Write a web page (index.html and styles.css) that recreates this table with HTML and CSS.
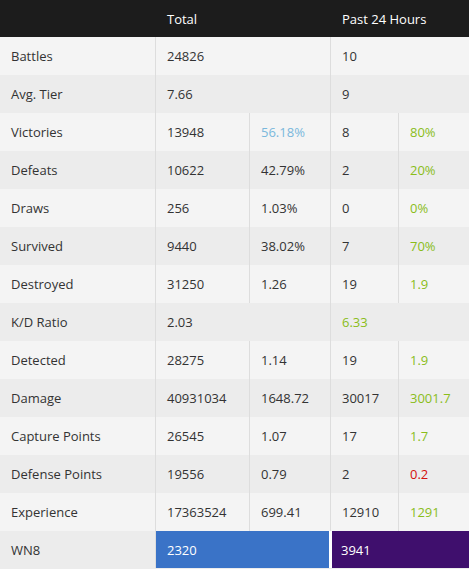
FILE: index.html
```html
<!DOCTYPE html>
<html lang="en">
<head>
<meta charset="utf-8">
<title>Stats</title>
<link rel="stylesheet" href="styles.css">
</head>
<body>
<div class="stats">
  <div class="row head">
    <div class="cell"></div>
    <div class="cell span2 nob">Total</div>
    <div class="cell span2 nob">Past 24 Hours</div>
  </div>
  <div class="row odd">
    <div class="cell">Battles</div>
    <div class="cell span2">24826</div>
    <div class="cell span2">10</div>
  </div>
  <div class="row even">
    <div class="cell">Avg. Tier</div>
    <div class="cell span2">7.66</div>
    <div class="cell span2">9</div>
  </div>
  <div class="row odd">
    <div class="cell">Victories</div>
    <div class="cell">13948</div>
    <div class="cell blue">56.18%</div>
    <div class="cell">8</div>
    <div class="cell green">80%</div>
  </div>
  <div class="row even">
    <div class="cell">Defeats</div>
    <div class="cell">10622</div>
    <div class="cell">42.79%</div>
    <div class="cell">2</div>
    <div class="cell green">20%</div>
  </div>
  <div class="row odd">
    <div class="cell">Draws</div>
    <div class="cell">256</div>
    <div class="cell">1.03%</div>
    <div class="cell">0</div>
    <div class="cell green">0%</div>
  </div>
  <div class="row even">
    <div class="cell">Survived</div>
    <div class="cell">9440</div>
    <div class="cell">38.02%</div>
    <div class="cell">7</div>
    <div class="cell green">70%</div>
  </div>
  <div class="row odd">
    <div class="cell">Destroyed</div>
    <div class="cell">31250</div>
    <div class="cell">1.26</div>
    <div class="cell">19</div>
    <div class="cell green">1.9</div>
  </div>
  <div class="row even">
    <div class="cell">K/D Ratio</div>
    <div class="cell span2">2.03</div>
    <div class="cell span2 green">6.33</div>
  </div>
  <div class="row odd">
    <div class="cell">Detected</div>
    <div class="cell">28275</div>
    <div class="cell">1.14</div>
    <div class="cell">19</div>
    <div class="cell green">1.9</div>
  </div>
  <div class="row even">
    <div class="cell">Damage</div>
    <div class="cell">40931034</div>
    <div class="cell">1648.72</div>
    <div class="cell">30017</div>
    <div class="cell green">3001.7</div>
  </div>
  <div class="row odd">
    <div class="cell">Capture Points</div>
    <div class="cell">26545</div>
    <div class="cell">1.07</div>
    <div class="cell">17</div>
    <div class="cell green">1.7</div>
  </div>
  <div class="row even">
    <div class="cell">Defense Points</div>
    <div class="cell">19556</div>
    <div class="cell">0.79</div>
    <div class="cell">2</div>
    <div class="cell red">0.2</div>
  </div>
  <div class="row odd">
    <div class="cell">Experience</div>
    <div class="cell">17363524</div>
    <div class="cell">699.41</div>
    <div class="cell">12910</div>
    <div class="cell green">1291</div>
  </div>
  <div class="row even">
    <div class="cell">WN8</div>
    <div class="cell span2 wn8-total">2320</div>
    <div class="cell span2 wn8-past">3941</div>
  </div>
</div>
</body>
</html>
```
FILE: styles.css
```css
html, body {
  margin: 0;
  padding: 0;
  background: #ffffff;
}
body {
  font-family: "Open Sans", "DejaVu Sans", sans-serif;
  font-size: 13px;
  color: #333333;
}
.stats {
  width: 469px;
}
.row {
  display: grid;
  grid-template-columns: 155px 94px 81px 68px 71px;
  height: 38px;
}
.row.head {
  height: 37px;
  background: #1c1c1c;
  color: #ffffff;
}
.row.odd {
  background: #f4f4f4;
}
.row.even {
  background: #ececec;
}
.cell {
  box-sizing: border-box;
  display: flex;
  align-items: center;
  padding-left: 11px;
  white-space: nowrap;
}
.cell + .cell {
  border-left: 1px solid #dddddd;
}
.head .cell + .cell {
  border-left: 1px solid #1c1c1c;
}
.span2 {
  grid-column: span 2;
}
.blue {
  color: #7ab8dc;
}
.green {
  color: #8abd1a;
}
.red {
  color: #d4100c;
}
.wn8-total {
  background: #3a73c7;
  color: #ffffff;
  border-right: 1px solid #ffffff;
  margin-bottom: 1px;
}
.row .wn8-past {
  background: #3f0f6d;
  color: #ffffff;
  border-left: 2px solid #ffffff;
  padding-left: 9px;
  margin-bottom: 1px;
}
```
